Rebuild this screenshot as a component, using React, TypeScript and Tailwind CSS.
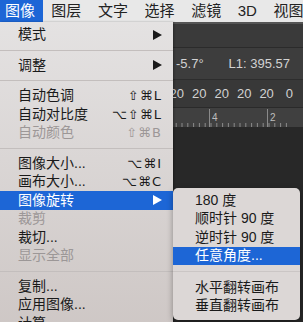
import React from "react";

type Item =
  | { label: string; shortcut?: string; arrow?: boolean; disabled?: boolean; active?: boolean }
  | "sep";

const menuItems: Item[] = [
  { label: "模式", arrow: true },
  "sep",
  { label: "调整", arrow: true },
  "sep",
  { label: "自动色调", shortcut: "⇧⌘L" },
  { label: "自动对比度", shortcut: "⌥⇧⌘L" },
  { label: "自动颜色", shortcut: "⇧⌘B", disabled: true },
  "sep",
  { label: "图像大小...", shortcut: "⌥⌘I" },
  { label: "画布大小...", shortcut: "⌥⌘C" },
  { label: "图像旋转", arrow: true, active: true },
  { label: "裁剪", disabled: true },
  { label: "裁切..." },
  { label: "显示全部", disabled: true },
  "sep",
  { label: "复制..." },
  { label: "应用图像..." },
  { label: "计算..." },
];

const subItems: Item[] = [
  { label: "180 度" },
  { label: "顺时针 90 度" },
  { label: "逆时针 90 度" },
  { label: "任意角度...", active: true },
  "sep",
  { label: "水平翻转画布" },
  { label: "垂直翻转画布" },
];

const topMenus = ["图像", "图层", "文字", "选择", "滤镜", "3D", "视图"];

function Arrow({ white }: { white?: boolean }) {
  return (
    <svg width="9" height="10" viewBox="0 0 9 10">
      <polygon points="0,0 9,5 0,10" fill={white ? "#ffffff" : "#1a1a1a"} />
    </svg>
  );
}

function Separator({ h, line }: { h: string; line: string }) {
  return (
    <div className={`${h} flex items-center`}>
      <div className={`h-px w-full ${line}`} />
    </div>
  );
}

function Ruler() {
  const ticks = [];
  for (let i = 0; i < 24; i++) {
    const x = 153 + i * 5.8;
    ticks.push(<line key={i} x1={x} x2={x} y1={15} y2={19} stroke="#8a8a8a" strokeWidth="1" />);
  }
  return (
    <svg width="303" height="19" className="block">
      {ticks}
      <line x1="209.5" x2="209.5" y1="1" y2="19" stroke="#8a8a8a" />
      <line x1="267.5" x2="267.5" y1="1" y2="19" stroke="#8a8a8a" />
      <text x="212" y="13" fill="#bdbdbd" fontSize="10" fontFamily="Liberation Sans">4</text>
      <text x="270" y="13" fill="#bdbdbd" fontSize="10" fontFamily="Liberation Sans">2</text>
    </svg>
  );
}

export default function App() {
  return (
    <div className="relative w-[303px] h-[322px] overflow-hidden font-['Liberation_Sans','Noto_Sans_CJK_SC',sans-serif] bg-[#282828]">
      {/* menu bar */}
      <div className="flex h-[22px] bg-[#e8e8e8] text-[15px] leading-[22px] text-[#222] whitespace-nowrap overflow-hidden">
        {topMenus.map((m, i) => (
          <span
            key={m}
            className={
              i === 0
                ? "shrink-0 pl-[5px] pr-[8px] bg-[#1d66d6] text-white"
                : "shrink-0 px-[8.3px]"
            }
          >
            {m}
          </span>
        ))}
      </div>

      {/* photoshop app behind */}
      <div className="flex flex-col text-[13px] text-[#d2d2d2] whitespace-nowrap">
        <div className="h-[26px] bg-[#3a3a3a] border-t-2 border-[#555] border-b border-b-[#2b2b2b]" />
        <div className="h-[32px] bg-[#3d3d3d] border-b border-[#2d2d2d] flex items-center pl-[176px] gap-[25px]">
          <span>-5.7°</span>
          <span>L1: 395.57</span>
          <span>L2: 0.00</span>
        </div>
        <div className="h-[28px] bg-[#383838] border-b border-[#2a2a2a] flex items-center pl-[169.5px] gap-[8px]">
          <span>20</span>
          <span>20</span>
          <span>20</span>
          <span>20</span>
          <span>20</span>
          <span className="ml-[4px]">0</span>
        </div>
        <div className="h-[19px] bg-[#404040]">
          <Ruler />
        </div>
        <div className="flex-1 bg-[#282828]" />
      </div>

      {/* image menu */}
      <div className="absolute top-[22px] left-0 w-[173px] h-[320px] pt-[3.5px] bg-gradient-to-b from-[#e4e2e2] to-[#cdc6c4] text-[14px] shadow-[1px_0_2px_rgba(0,0,0,0.3)]">
        {menuItems.map((it, i) =>
          it === "sep" ? (
            <Separator key={i} h="h-[12px]" line="bg-[#c3bebd]" />
          ) : (
            <div
              key={i}
              className={`h-[18.5px] flex items-center pl-[18px] pr-[11px] ${
                it.active ? "bg-[#1d66d6] text-white" : it.disabled ? "text-[#9c9797]" : "text-[#1a1a1a]"
              }`}
            >
              <span className="flex-1">{it.label}</span>
              {it.shortcut && (
                <span className="font-['DejaVu_Sans',sans-serif] text-[13px] tracking-[1px]">{it.shortcut}</span>
              )}
              {it.arrow && <Arrow white={it.active} />}
            </div>
          )
        )}
      </div>

      {/* rotate submenu */}
      <div className="absolute top-[188px] left-[173px] w-[127px] pt-[3px] pb-[5px] rounded-[5px] bg-[#dcd7d6] text-[14px] text-[#1a1a1a] shadow-[0_2px_6px_rgba(0,0,0,0.35)]">
        {subItems.map((it, i) =>
          it === "sep" ? (
            <Separator key={i} h="h-[13px]" line="bg-[#cbc6c5]" />
          ) : (
            <div
              key={i}
              className={`h-[18.5px] flex items-center pl-[22px] ${it.active ? "bg-[#1d66d6] text-white" : ""}`}
            >
              {it.label}
            </div>
          )
        )}
      </div>
    </div>
  );
}
